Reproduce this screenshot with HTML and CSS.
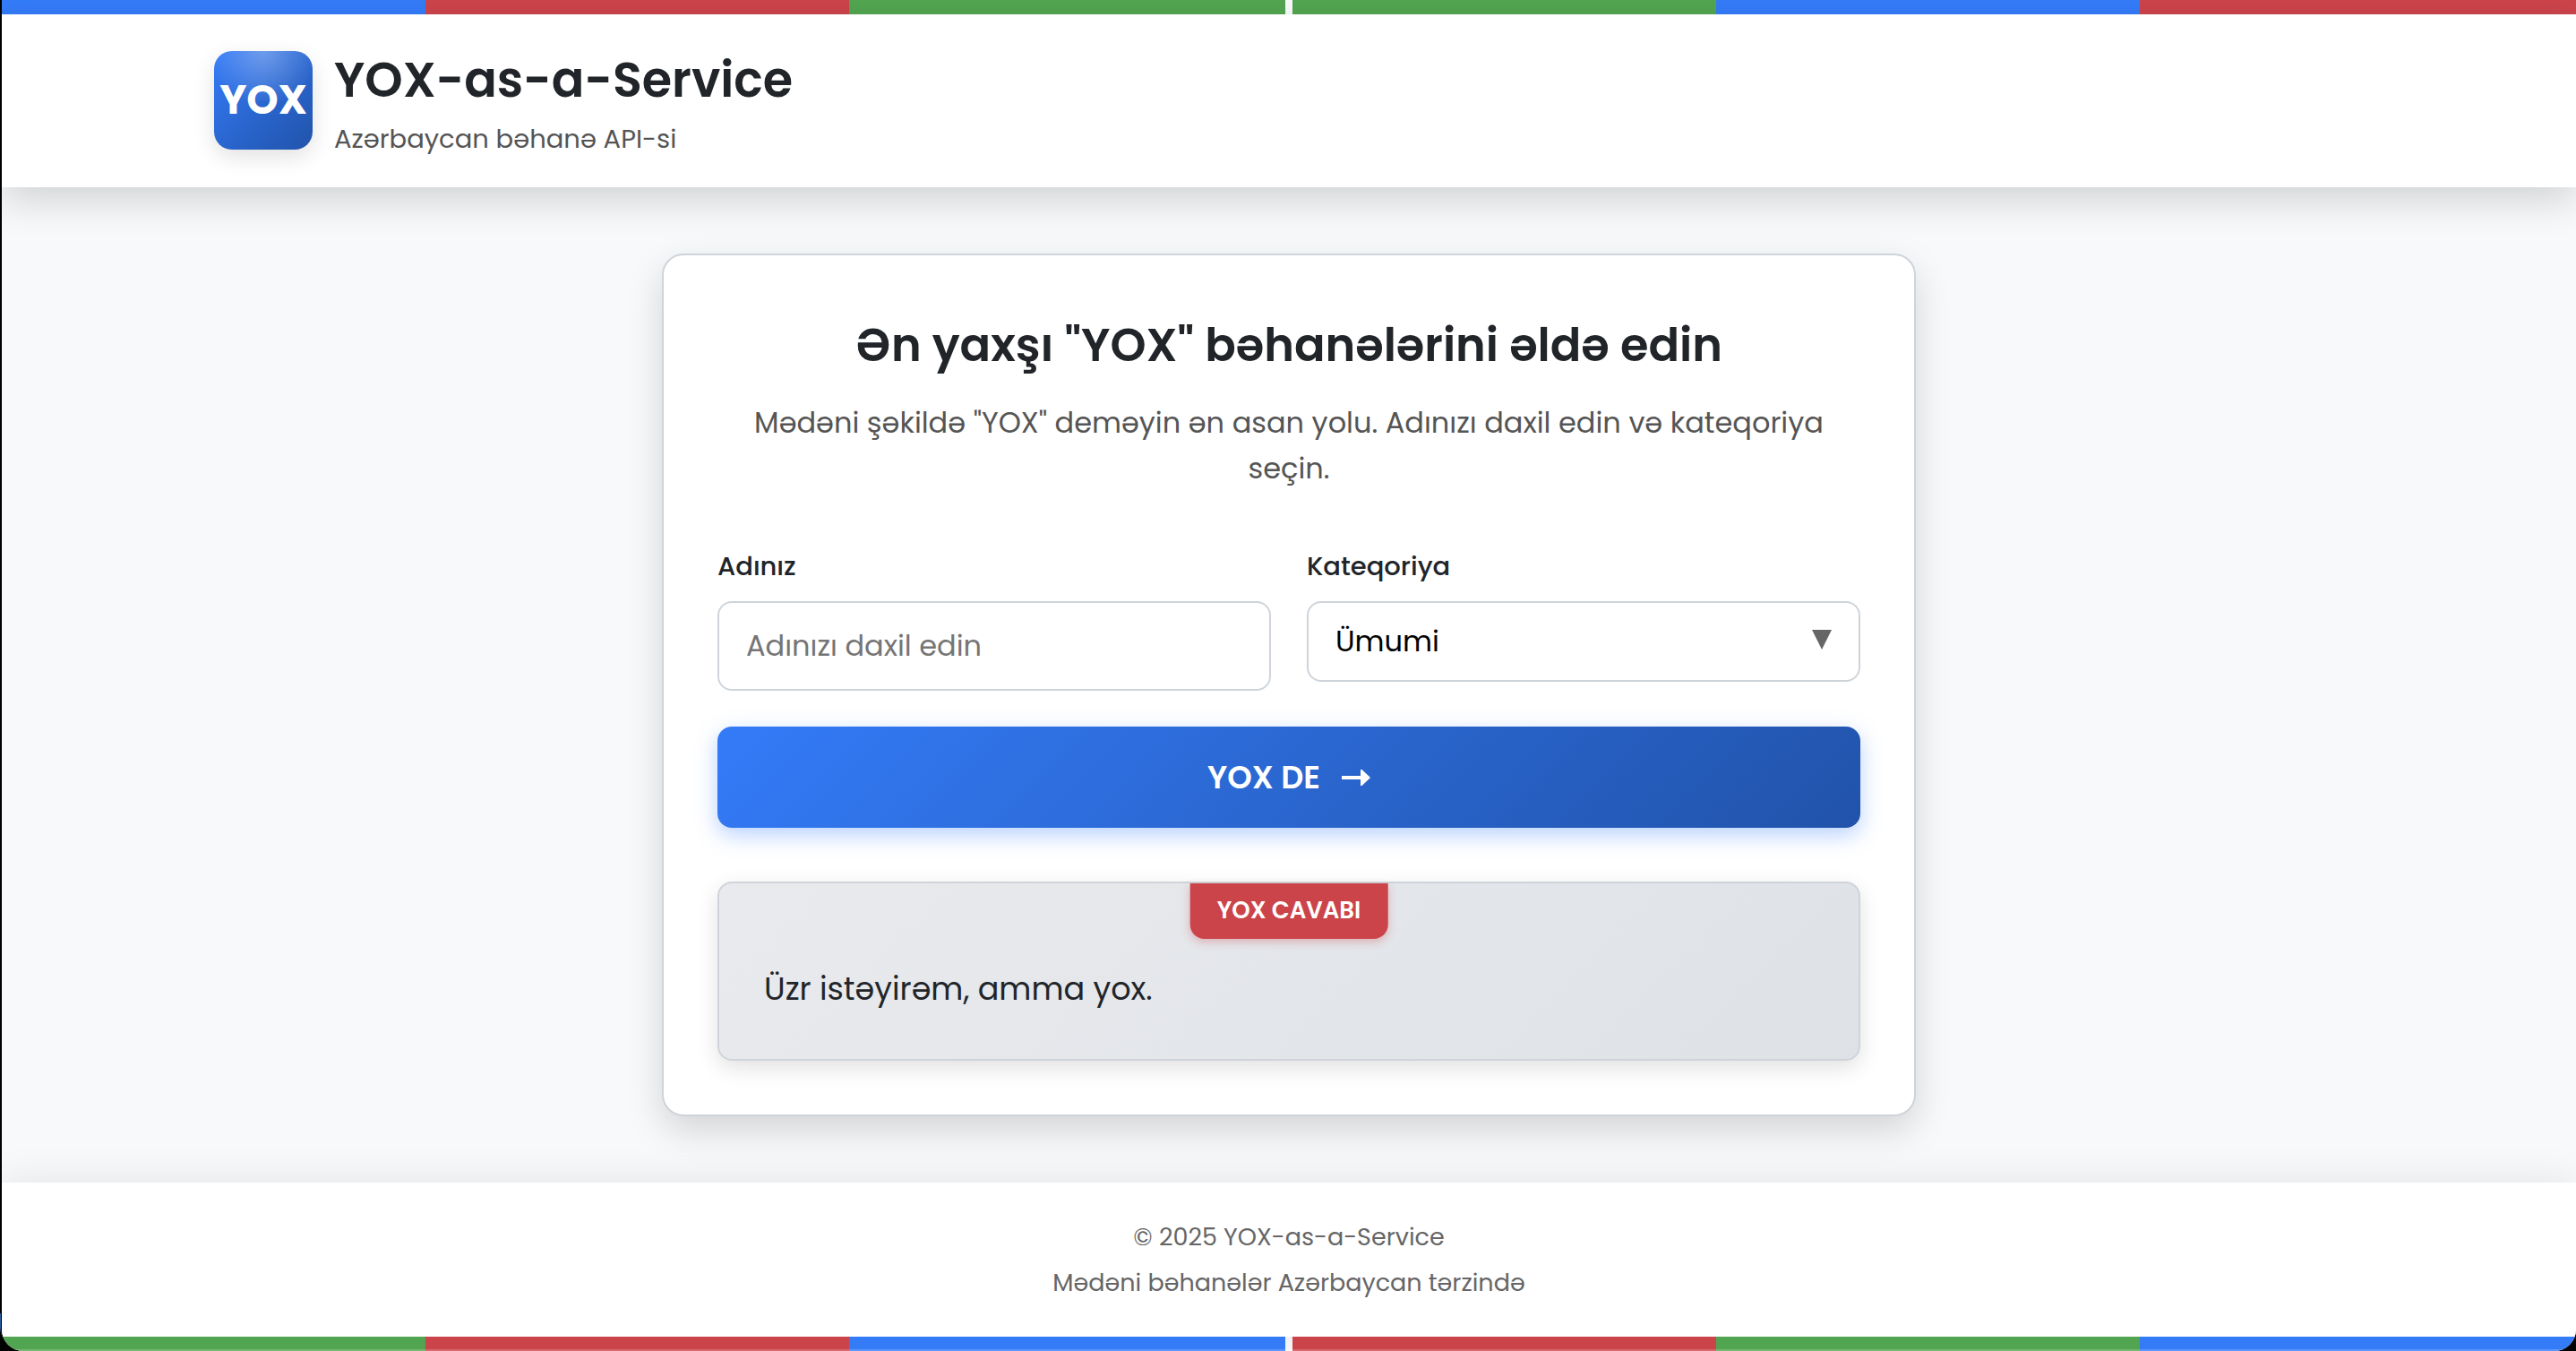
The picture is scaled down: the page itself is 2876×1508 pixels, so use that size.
FILE: index.html
```html
<!DOCTYPE html>
<html lang="az">
<head>
<meta charset="utf-8">
<meta name="viewport" content="width=device-width, initial-scale=1">
<title>YOX-as-a-Service</title>
<link rel="stylesheet" href="styles.css">
</head>
<body>
<div class="page">
  <div class="stripes stripes-top"><span></span><span></span></div>
  <header class="header">
    <div class="container brand">
      <div class="logo">YOX</div>
      <div>
        <h1 class="brand-title">YOX-as-a-Service</h1>
        <p class="brand-subtitle">Azərbaycan bəhanə API-si</p>
      </div>
    </div>
  </header>

  <main class="main">
    <section class="card">
      <h2 class="card-title">Ən yaxşı "YOX" bəhanələrini əldə edin</h2>
      <p class="card-text">Mədəni şəkildə "YOX" deməyin ən asan yolu. Adınızı daxil edin və kateqoriya seçin.</p>
      <form class="form">
        <div class="field">
          <label for="name">Adınız</label>
          <input id="name" class="control" type="text" placeholder="Adınızı daxil edin">
        </div>
        <div class="field">
          <label for="category">Kateqoriya</label>
          <div class="select-wrap">
            <select id="category" class="control">
              <option>Ümumi</option>
            </select>
            <svg class="caret" viewBox="0 0 22 22" aria-hidden="true"><path d="M0 0H22L11 22Z"/></svg>
          </div>
        </div>
        <button class="submit" type="button">
          YOX DE
          <svg class="arrow" viewBox="0 0 32 18" aria-hidden="true"><path d="M0 7H21V0H22.500L32 9L22.500 18H21V11H0Z"/></svg>
        </button>
      </form>
      <div class="result">
        <span class="badge">YOX CAVABI</span>
        <p>Üzr istəyirəm, amma yox.</p>
      </div>
    </section>
  </main>

  <footer class="footer">
    <p>© 2025 YOX-as-a-Service</p>
    <p>Mədəni bəhanələr Azərbaycan tərzində</p>
  </footer>
  <div class="stripes stripes-bottom"><span></span><span></span></div>
</div>
</body>
</html>
```
FILE: styles.css
```css
:root {
  --blue: #347bf8;
  --blue-dark: #2153aa;
  --red: #cb444a;
  --green: #52a550;
  --ink: #212529;
  --border: #ced4da;
  --shadow-lg: 0 16px 40px rgba(0, 0, 0, 0.15);
  --shadow-md: 0 8px 24px rgba(0, 0, 0, 0.12);
}

* { box-sizing: border-box; margin: 0; }

html { background: #000; }

body {
  position: relative;
  font-family: Poppins, Inter, sans-serif;
  line-height: 1.6;
  color: var(--ink);
}

/* sliver of desktop behind the rounded window corner */
body::before {
  content: "";
  position: absolute;
  left: 0;
  bottom: 1px;
  width: 40px;
  height: 41px;
  border-bottom-left-radius: 26px;
  background: #2a5a9c;
}

.page {
  position: relative;
  display: flex;
  flex-direction: column;
  min-height: 100vh;
  margin-left: 2px;
  background: #f8f9fb;
  border-radius: 0 0 24px 24px;
  box-shadow: 0 0 0 1px #000;
  overflow: hidden;
}

.stripes {
  display: flex;
  gap: 8px;
  height: 16px;
}
.stripes span {
  flex: 1;
  background: linear-gradient(90deg, var(--a) 33%, var(--b) 33% 66%, var(--c) 66%);
}
.stripes-top span:first-child { --a: var(--blue); --b: var(--red); --c: var(--green); }
.stripes-top span:last-child { --a: var(--green); --b: var(--blue); --c: var(--red); }
.stripes-bottom span:first-child { --a: var(--green); --b: var(--red); --c: var(--blue); }
.stripes-bottom span:last-child { --a: var(--red); --b: var(--green); --c: var(--blue); }
.stripes-bottom span { box-shadow: inset 0 -2px rgba(255, 255, 255, 0.2); }

.header {
  padding: 30px 0;
  background: #fff;
  box-shadow: var(--shadow-lg);
}

.container {
  max-width: 2400px;
  margin: 0 auto;
}

.brand {
  display: flex;
  align-items: center;
  gap: 24px;
}

.logo {
  display: grid;
  place-items: center;
  width: 110px;
  height: 110px;
  border-radius: 20px;
  background:
    radial-gradient(circle at 50% 0, rgba(255, 255, 255, 0.3), transparent 80%) top / 100% 50% no-repeat,
    linear-gradient(135deg, var(--blue), var(--blue-dark));
  box-shadow: var(--shadow-md);
  color: #fff;
  font-size: 45px;
  font-weight: 700;
}

.brand-title {
  font-size: 54px;
  font-weight: 600;
}
.brand-subtitle {
  font-size: 29px;
  color: #555;
}

.main {
  flex: 1;
  display: flex;
  align-items: center;
  justify-content: center;
  padding: 40px;
}

.card {
  width: 100%;
  max-width: 1400px;
  padding: 60px;
  background: #fff;
  border: 2px solid var(--border);
  border-radius: 24px;
  box-shadow: var(--shadow-lg);
}

.card-title {
  margin-bottom: 20px;
  font-size: 51px;
  font-weight: 600;
  text-align: center;
}
.card-text {
  margin-bottom: 60px;
  font-size: 32px;
  color: #555;
  text-align: center;
}

.form {
  display: grid;
  grid-template-columns: 1fr 1fr;
  align-items: start;
  gap: 40px;
}

.field label {
  display: block;
  margin-bottom: 16px;
  font-size: 29px;
  font-weight: 500;
}

.control {
  display: block;
  width: 100%;
  height: 100px;
  padding: 0 30px;
  border: 2px solid var(--border);
  border-radius: 16px;
  background: #fff;
  font: inherit;
  font-size: 32px;
  color: #000;
}
.control::placeholder { color: #757575; }

.select-wrap { position: relative; }
select.control {
  height: 90px;
  appearance: none;
}
.caret {
  position: absolute;
  top: 32px;
  right: 32px;
  width: 22px;
  height: 22px;
  fill: #666;
  pointer-events: none;
}

.submit {
  grid-column: 1 / -1;
  display: flex;
  align-items: center;
  justify-content: center;
  gap: 24px;
  min-height: 113px;
  padding: 28px;
  border: 0;
  border-radius: 16px;
  background: linear-gradient(135deg, var(--blue), var(--blue-dark));
  box-shadow: 0 8px 24px rgba(52, 123, 248, 0.35);
  font: inherit;
  font-size: 35px;
  font-weight: 600;
  color: #fff;
}
.arrow {
  width: 32px;
  height: 18px;
  fill: currentColor;
}

.result {
  position: relative;
  margin-top: 60px;
  padding: 90px 50px 50px;
  border: 2px solid var(--border);
  border-radius: 16px;
  background: linear-gradient(135deg, #e9eaee, #dee2e6);
  box-shadow: var(--shadow-md);
  font-size: 35px;
}
.badge {
  position: absolute;
  top: 0;
  left: 50%;
  transform: translateX(-50%);
  padding: 10px 30px;
  border-radius: 0 0 16px 16px;
  background: var(--red);
  box-shadow: 0 4px 10px rgba(203, 68, 74, 0.3);
  color: #fff;
  font-size: 26px;
  font-weight: 600;
  white-space: nowrap;
}

.footer {
  padding: 35px;
  background: #fff;
  box-shadow: 0 -4px 40px rgba(0, 0, 0, 0.08);
  font-size: 27px;
  line-height: 51px;
  color: #666;
  text-align: center;
}
```
